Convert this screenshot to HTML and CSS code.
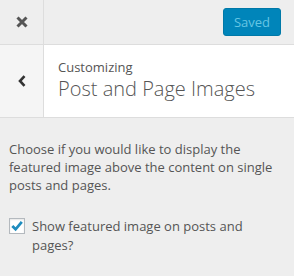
FILE: index.html
```html
<!DOCTYPE html>
<html lang="en">
<head>
    <meta charset="UTF-8">
    <meta name="viewport" content="width=device-width, initial-scale=1.0">
    <title>Customize</title>
    <link rel="stylesheet" href="styles.css">
</head>
<body>
    <div class="panel">
        <header class="topbar">
            <button class="close" aria-label="Close">
                <svg width="12" height="12" viewBox="0 0 12 12"><path d="M1.5 1.5 L10.5 10.5 M10.5 1.5 L1.5 10.5" stroke="#555" stroke-width="3" fill="none"/></svg>
            </button>
            <button class="save" disabled>Saved</button>
        </header>

        <div class="section-title">
            <button class="back" aria-label="Back">
                <svg width="8" height="12" viewBox="0 0 8 12"><path d="M6.5 1.2 L2 6 L6.5 10.8" stroke="#333" stroke-width="2.6" fill="none"/></svg>
            </button>
            <div class="title-text">
                <span class="action">Customizing</span>
                <h3>Post and Page Images</h3>
            </div>
        </div>

        <div class="controls">
            <p class="description">Choose if you would like to display the featured image above the content on single posts and pages.</p>
            <label class="check-row">
                <span class="checkbox">
                    <svg width="14" height="14" viewBox="0 0 14 14"><path d="M2.3 7 L5.6 10.3 L11.8 2.9" stroke="#1e8cbe" stroke-width="2.8" fill="none"/></svg>
                </span>
                <span class="label-text">Show featured image on posts and pages?</span>
            </label>
        </div>
    </div>
</body>
</html>
```

FILE: styles.css
```css
/* Base */
body {
    margin: 0;
    font-family: 'Open Sans', 'Noto Sans', sans-serif;
    font-size: 13px;
    color: #555;
    background-color: #eee;
}

button {
    font-family: inherit;
    border: none;
    padding: 0;
    margin: 0;
}

/* Top bar */
.topbar {
    display: flex;
    align-items: center;
    height: 44px;
    border-bottom: 1px solid #ddd;
    background-color: #eee;
}

.close {
    width: 44px;
    height: 44px;
    border-right: 1px solid #ddd;
    background: transparent;
    display: flex;
    align-items: center;
    justify-content: center;
}

.save {
    margin-left: auto;
    margin-right: 13px;
    width: 58px;
    height: 28px;
    font-size: 13px;
    color: #66c6e4;
    background-color: #0085ba;
    border: 1px solid #0079a8;
    border-radius: 3px;
}

/* Section heading */
.section-title {
    display: flex;
    height: 72px;
    border-bottom: 1px solid #ddd;
    background-color: #fff;
}

.back {
    width: 44px;
    border-right: 1px solid #ddd;
    background-color: #f5f5f5;
    display: flex;
    align-items: center;
    justify-content: center;
}

.title-text {
    padding: 13px 0 0 14px;
}

.action {
    display: block;
    font-size: 13px;
    line-height: 18px;
    color: #555;
}

h3 {
    margin: 0;
    font-size: 20px;
    font-weight: 300;
    line-height: 26px;
    color: #555;
}

/* Controls */
.controls {
    padding: 22px 12px 0 9px;
}

.description {
    margin: 0 0 22px;
    line-height: 1.4;
}

.check-row {
    display: flex;
    align-items: flex-start;
    gap: 7px;
    line-height: 19px;
}

.checkbox {
    flex: none;
    width: 14px;
    height: 14px;
    margin-top: 1px;
    border: 1px solid #b4b9be;
    background-color: #fff;
    box-shadow: inset 0 1px 2px rgba(0, 0, 0, 0.1);
    display: flex;
}
```
